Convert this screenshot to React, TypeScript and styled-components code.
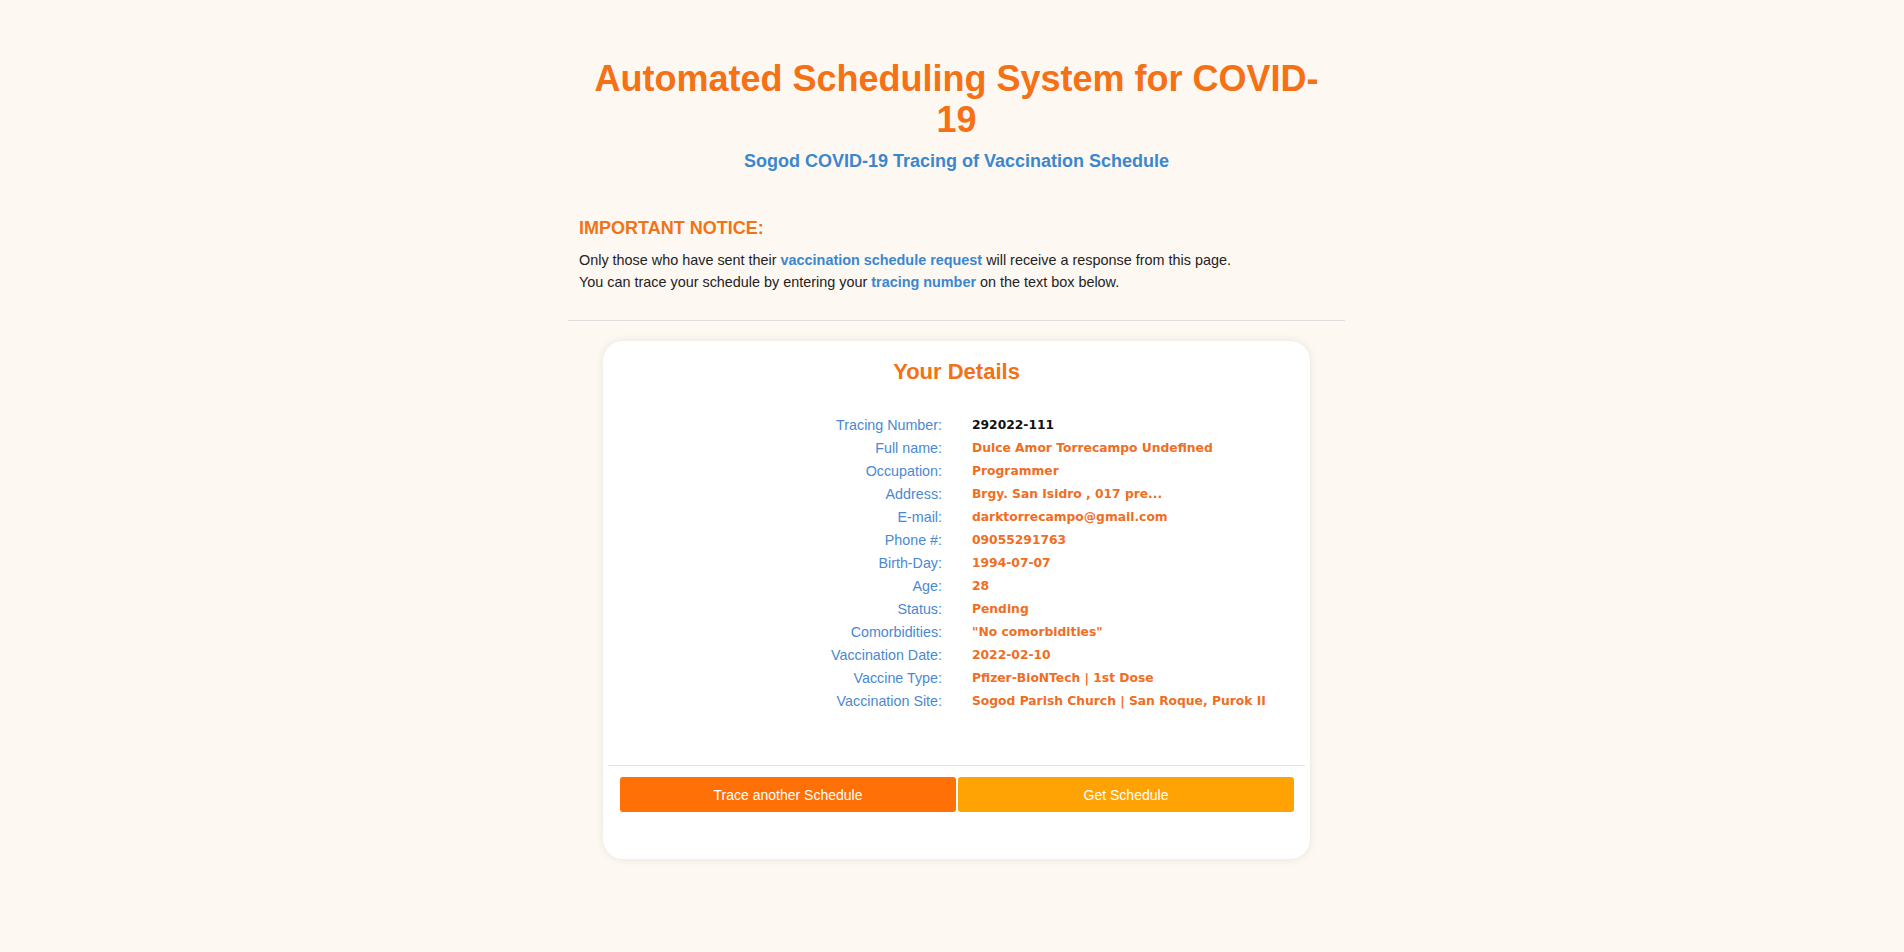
import React from "react";
import styled, { createGlobalStyle } from "styled-components";

const GlobalStyle = createGlobalStyle`
  html, body {
    margin: 0;
    padding: 0;
    background: #fef8f2;
  }
  body {
    font-family: "Liberation Sans", Arial, sans-serif;
    color: #222;
  }
`;

const Page = styled.div`
  min-height: 952px;
  padding-left: 9px;
  box-sizing: border-box;
  background: #fef8f2;
`;

const Container = styled.main`
  width: 777px;
  margin: 0 auto;
  padding-top: 58px;
`;

const Header = styled.header`
  text-align: center;
  padding: 0 20px;
`;

const Title = styled.h1`
  margin: 0;
  font-size: 36px;
  line-height: 41px;
  font-weight: 700;
  color: #f47116;
`;

const Subtitle = styled.h2`
  margin: 11px 0 0;
  font-size: 18px;
  line-height: 21px;
  font-weight: 700;
  color: #3a87cf;
`;

const Notice = styled.section`
  padding: 0 11px;
  margin-top: 46px;
`;

const NoticeTitle = styled.h3`
  margin: 0 0 10px;
  font-size: 18px;
  line-height: 21px;
  font-weight: 700;
  color: #f07318;
`;

const NoticeText = styled.p`
  margin: 0;
  font-size: 14.4px;
  line-height: 22px;
  color: #222;
`;

const Highlight = styled.strong`
  color: #3a87cf;
  font-weight: 700;
`;

const Divider = styled.hr`
  border: 0;
  border-top: 1px solid #ddd;
  margin: 27px 0 20px;
`;

const Card = styled.section`
  margin: 0 35px;
  background: #fff;
  border-radius: 20px;
  box-shadow: 0 0 8px rgba(0, 0, 0, 0.09);
  padding: 18px 0 47px;
`;

const CardTitle = styled.h3`
  margin: 0;
  text-align: center;
  font-size: 22px;
  line-height: 25px;
  font-weight: 700;
  color: #f47116;
`;

const DetailList = styled.dl`
  display: grid;
  grid-template-columns: 339px 1fr;
  column-gap: 30px;
  margin: 30px 0 0;
`;

const Label = styled.dt`
  text-align: right;
  font-size: 14.3px;
  line-height: 23px;
  color: #4a89cf;
`;

const Value = styled.dd<{ $dark?: boolean }>`
  margin: 0;
  font-family: Verdana, "DejaVu Sans", sans-serif;
  font-weight: 700;
  font-size: 12.3px;
  line-height: 23px;
  color: ${(p) => (p.$dark ? "#111" : "#ef6e1f")};
  white-space: nowrap;
`;

const CardFooter = styled.div`
  margin-top: 52px;
  margin-left: 5px;
  margin-right: 5px;
  border-top: 1px solid #e0e0e2;
  padding: 11px 11px 0 12px;
  display: flex;
  gap: 2px;
`;

const Button = styled.button<{ $variant: "primary" | "secondary" }>`
  flex: 1;
  height: 35px;
  border: 0;
  border-radius: 3px;
  font-family: "Liberation Sans", Arial, sans-serif;
  font-size: 14px;
  color: #fff;
  cursor: pointer;
  background: ${(p) => (p.$variant === "primary" ? "#ff7006" : "#ffa304")};
`;

const details: { label: string; value: string; dark?: boolean }[] = [
  { label: "Tracing Number:", value: "292022-111", dark: true },
  { label: "Full name:", value: "Dulce Amor Torrecampo Undefined" },
  { label: "Occupation:", value: "Programmer" },
  { label: "Address:", value: "Brgy. San Isidro , 017 pre..." },
  { label: "E-mail:", value: "darktorrecampo@gmail.com" },
  { label: "Phone #:", value: "09055291763" },
  { label: "Birth-Day:", value: "1994-07-07" },
  { label: "Age:", value: "28" },
  { label: "Status:", value: "Pending" },
  { label: "Comorbidities:", value: "\"No comorbidities\"" },
  { label: "Vaccination Date:", value: "2022-02-10" },
  { label: "Vaccine Type:", value: "Pfizer-BioNTech | 1st Dose" },
  { label: "Vaccination Site:", value: "Sogod Parish Church | San Roque, Purok II" },
];

export default function App() {
  return (
    <Page>
      <GlobalStyle />
      <Container>
        <Header>
          <Title>Automated Scheduling System for COVID-19</Title>
          <Subtitle>Sogod COVID-19 Tracing of Vaccination Schedule</Subtitle>
        </Header>
        <Notice>
          <NoticeTitle>IMPORTANT NOTICE:</NoticeTitle>
          <NoticeText>
            Only those who have sent their <Highlight>vaccination schedule request</Highlight> will
            receive a response from this page.
          </NoticeText>
          <NoticeText>
            You can trace your schedule by entering your <Highlight>tracing number</Highlight> on the
            text box below.
          </NoticeText>
        </Notice>
        <Divider />
        <Card>
          <CardTitle>Your Details</CardTitle>
          <DetailList>
            {details.map((d) => (
              <React.Fragment key={d.label}>
                <Label>{d.label}</Label>
                <Value $dark={d.dark}>{d.value}</Value>
              </React.Fragment>
            ))}
          </DetailList>
          <CardFooter>
            <Button $variant="primary">Trace another Schedule</Button>
            <Button $variant="secondary">Get Schedule</Button>
          </CardFooter>
        </Card>
      </Container>
    </Page>
  );
}
